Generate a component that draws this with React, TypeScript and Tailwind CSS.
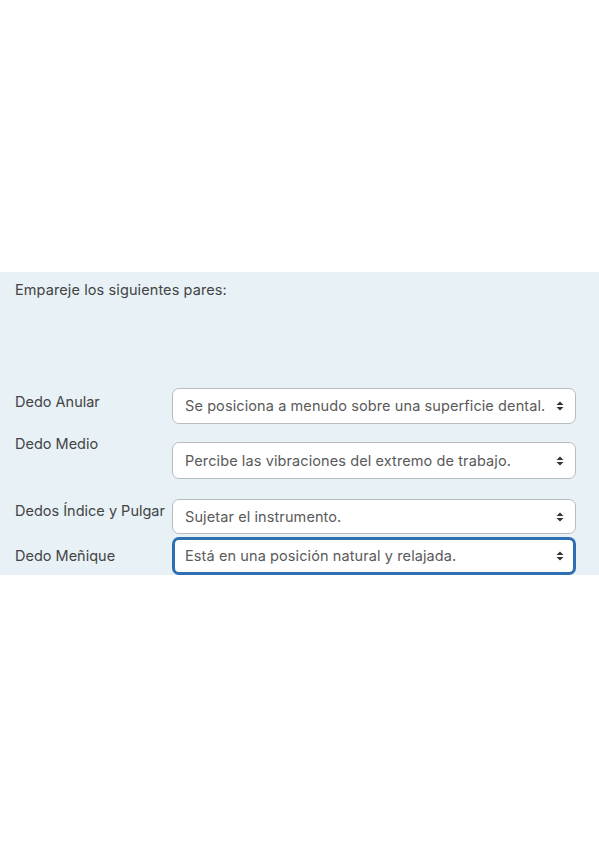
import { useState } from 'react';

interface Pair {
  label: string;
  value: string;
  rowMt: string;
  labelPt: string;
  selectMt: string;
  selectH: string;
  focused?: boolean;
}

const options = [
  'Se posiciona a menudo sobre una superficie dental.',
  'Percibe las vibraciones del extremo de trabajo.',
  'Sujetar el instrumento.',
  'Está en una posición natural y relajada.',
];

const pairs: Pair[] = [
  { label: 'Dedo Anular', value: options[0], rowMt: 'mt-0', labelPt: 'pt-[4px]', selectMt: 'mt-0', selectH: 'h-[36px]' },
  { label: 'Dedo Medio', value: options[1], rowMt: 'mt-[10px]', labelPt: 'pt-0', selectMt: 'mt-[8px]', selectH: 'h-[37px]' },
  { label: 'Dedos Índice y Pulgar', value: options[2], rowMt: 'mt-[20px]', labelPt: 'pt-[2px]', selectMt: 'mt-0', selectH: 'h-[35px]' },
  { label: 'Dedo Meñique', value: options[3], rowMt: 'mt-[3px]', labelPt: 'pt-[9px]', selectMt: 'mt-0', selectH: 'h-[38px]', focused: true },
];

function SortArrows() {
  return (
    <svg width="8" height="10" viewBox="0 0 8 10" className="text-[#333]">
      <path d="M4 0.5 L7.5 4 H0.5 Z" fill="currentColor" />
      <path d="M4 9.5 L7.5 6 H0.5 Z" fill="currentColor" />
    </svg>
  );
}

export default function App() {
  const [values, setValues] = useState(pairs.map(p => p.value));

  return (
    <div className="w-[599px] h-[848px] bg-white" style={{ fontFamily: 'Inter, "Noto Sans", sans-serif' }}>
      <div className="h-[272px]" />
      {/* Question panel */}
      <div className="h-[303px] bg-[#e7f1f6] pl-[15px] pr-[23px] pt-[8px] overflow-hidden">
        <p className="text-[14.5px] leading-[20px] text-[#444] tracking-[0.1px]">Empareje los siguientes pares:</p>

        <div className="mt-[88px]">
          {pairs.map((pair, i) => (
            <div key={pair.label} className={`flex items-start ${pair.rowMt}`}>
              <div className={`w-[157px] shrink-0 text-[14.5px] leading-[20px] text-[#444] whitespace-nowrap ${pair.labelPt}`}>
                {pair.label}
              </div>
              <div className={`relative flex-1 ${pair.selectMt}`}>
                <select
                  value={values[i]}
                  onChange={e => setValues(v => v.map((x, j) => (j === i ? e.target.value : x)))}
                  className={`w-full appearance-none bg-white rounded-[7px] pr-[28px] text-[14.5px] text-[#5a5a5a] tracking-[0.1px] outline-none ${pair.selectH} ${
                    pair.focused ? 'border-[3px] border-[#2d6fb0] pl-[10px]' : 'border border-[#b9bcbf] pl-[12px]'
                  }`}
                  style={{ fontFamily: 'Inter, "Noto Sans", sans-serif' }}
                >
                  {options.map(o => (
                    <option key={o} value={o}>{o}</option>
                  ))}
                </select>
                <div className="absolute right-[12px] top-1/2 -translate-y-1/2 pointer-events-none flex">
                  <SortArrows />
                </div>
              </div>
            </div>
          ))}
        </div>
      </div>
    </div>
  );
}
